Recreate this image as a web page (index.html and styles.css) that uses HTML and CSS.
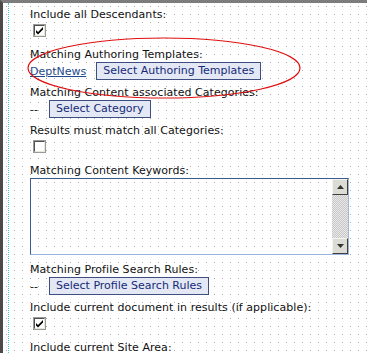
FILE: index.html
```html
<!DOCTYPE html>
<html lang="en">
  <head>
    <meta charset="UTF-8" />
    <title>Menu Component</title>
    <link rel="stylesheet" href="styles.css">
  </head>
  <body>
    <div class="frame">
      <div class="content">
        <div class="field check-field">
          <div class="label">Include all Descendants:</div>
          <span class="checkbox checked"><svg width="9" height="9" viewBox="0 0 9 9"><path d="M1 4 L3 6 L8 1 L8 3.5 L3 8.5 L1 6.5 Z" fill="#000"/></svg></span>
        </div>

        <div class="field button-field">
          <div class="label">Matching Authoring Templates:</div>
          <div class="row">
            <a href="#" class="link">DeptNews</a>
            <button class="btn">Select Authoring Templates</button>
          </div>
        </div>

        <div class="field button-field">
          <div class="label">Matching Content associated Categories:</div>
          <div class="row">
            <span class="none">--</span>
            <button class="btn">Select Category</button>
          </div>
        </div>

        <div class="field check-field">
          <div class="label">Results must match all Categories:</div>
          <span class="checkbox"></span>
        </div>

        <div class="field text-field">
          <div class="label">Matching Content Keywords:</div>
          <div class="textarea">
            <div class="scrollbar">
              <span class="arrow"><svg width="7" height="4" viewBox="0 0 7 4"><path d="M3.5 0 L7 4 L0 4 Z" fill="#333"/></svg></span>
              <span class="track"></span>
              <span class="arrow"><svg width="7" height="4" viewBox="0 0 7 4"><path d="M0 0 L7 0 L3.5 4 Z" fill="#333"/></svg></span>
            </div>
          </div>
        </div>

        <div class="field button-field">
          <div class="label">Matching Profile Search Rules:</div>
          <div class="row">
            <span class="none">--</span>
            <button class="btn">Select Profile Search Rules</button>
          </div>
        </div>

        <div class="field check-field">
          <div class="label">Include current document in results (if applicable):</div>
          <span class="checkbox checked"><svg width="9" height="9" viewBox="0 0 9 9"><path d="M1 4 L3 6 L8 1 L8 3.5 L3 8.5 L1 6.5 Z" fill="#000"/></svg></span>
        </div>

        <div class="field">
          <div class="label">Include current Site Area:</div>
        </div>
      </div>

      <!-- highlight drawn over the form -->
      <svg class="mark" width="300" height="70" viewBox="0 0 300 70">
        <ellipse cx="150" cy="35" rx="136" ry="30" fill="none" stroke="#e01010" stroke-width="1.2"/>
      </svg>
    </div>
  </body>
</html>
```

FILE: styles.css
```css
html, body {
  margin: 0;
  padding: 0;
  overflow: hidden;
  background: #fff;
}
body {
  font-family: "DejaVu Sans", Verdana, sans-serif;
  font-size: 11px;
  color: #111;
}
.frame {
  position: relative;
  height: 353px;
  border-top: 3px solid #7c7c7c;
  border-left: 3px solid #4a4a4a;
  background-color: #fff;
  background-image: url("data:image/svg+xml,%3Csvg xmlns='http://www.w3.org/2000/svg' width='8' height='8'%3E%3Crect x='3' y='3' width='1' height='1' fill='%23a8a8a8'/%3E%3C/svg%3E");
  box-sizing: border-box;
}
.content {
  margin-left: 5px;
  border-left: 1px dotted #4cc8d0;
  padding: 5px 0 0 21px;
  height: 100%;
  box-sizing: border-box;
}
.label {
  line-height: 14px;
  white-space: nowrap;
  letter-spacing: 0.05px;
}
.field {
  margin-bottom: 6px;
}
.check-field {
  margin-bottom: 11px;
}
.text-field {
  margin-bottom: 8px;
}
.row {
  display: flex;
  align-items: center;
  height: 18px;
}
.checkbox {
  display: flex;
  align-items: center;
  justify-content: center;
  width: 9px;
  height: 9px;
  margin: 2px 0 0 3px;
  background: #fff;
  border: 2px solid;
  border-color: #505050 #e8e8d8 #e8e8d8 #505050;
  outline: 1px solid #9a9a9a;
  outline-offset: -1px;
}
.link {
  color: #1f4a8c;
  margin-right: 10px;
}
.none {
  margin-right: 11px;
}
.btn {
  font-family: inherit;
  font-size: 11px;
  color: #142a78;
  background: #e4e8f4;
  border: 1px solid #3e4e80;
  padding: 0 6px;
  height: 18px;
  line-height: 16px;
  margin: 0;
}
.textarea {
  display: flex;
  justify-content: flex-end;
  width: 319px;
  height: 77px;
  border: 1px solid;
  border-color: #3c5c90 #9ab4de #9ab4de #3c5c90;
  box-sizing: border-box;
}
.scrollbar {
  display: flex;
  flex-direction: column;
  width: 16px;
}
.arrow {
  display: flex;
  align-items: center;
  justify-content: center;
  height: 16px;
  box-sizing: border-box;
  background: #dcdcd4;
  border: 1px solid;
  border-color: #f4f4f0 #404040 #404040 #f4f4f0;
}
.track {
  flex: 1;
  background-color: #e8e8e8;
  background-image: url("data:image/svg+xml,%3Csvg xmlns='http://www.w3.org/2000/svg' width='2' height='2'%3E%3Crect width='1' height='1' fill='%23c8c8c8'/%3E%3Crect x='1' y='1' width='1' height='1' fill='%23c8c8c8'/%3E%3C/svg%3E");
}
.mark {
  position: absolute;
  left: 11px;
  top: 30px;
}
```
